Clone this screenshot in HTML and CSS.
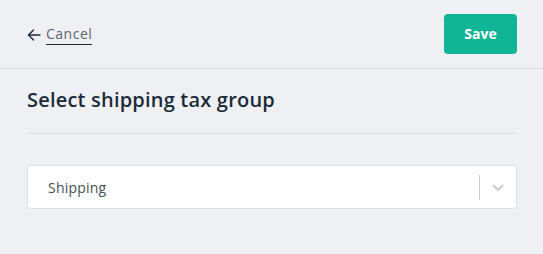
FILE: index.html
```html
<!DOCTYPE html>
<html lang="en">
<head>
    <meta charset="UTF-8">
    <meta name="viewport" content="width=device-width, initial-scale=1.0">
    <title>Select shipping tax group</title>
    <link rel="stylesheet" href="styles.css">
</head>
<body>
    <header class="topbar">
        <a class="cancel" href="#">
            <svg class="cancel-arrow" width="14" height="12" viewBox="0 0 14 12" fill="none" stroke="#1c2b3a" stroke-width="1.4" stroke-linecap="round" stroke-linejoin="round">
                <path d="M13 6H1.5"/>
                <path d="M6.5 1L1.5 6l5 5"/>
            </svg>
            <span class="cancel-text">Cancel</span>
        </a>
        <button class="save-btn">Save</button>
    </header>
    <main class="content">
        <h1 class="title">Select shipping tax group</h1>
        <div class="select-box">
            <span class="select-value">Shipping</span>
            <div class="select-indicators">
                <span class="select-sep"></span>
                <svg class="select-chevron" width="12" height="8" viewBox="0 0 12 8" fill="none" stroke="#cccccc" stroke-width="2" stroke-linecap="round" stroke-linejoin="round">
                    <path d="M1.5 1.5L6 6l4.5-4.5"/>
                </svg>
            </div>
        </div>
    </main>
</body>
</html>
```

FILE: styles.css
```css
body {
    margin: 0;
    padding: 0;
    background: #eff0f4;
    font-family: "Open Sans", Lato, sans-serif;
    color: #1c2b3a;
}
.topbar {
    display: flex;
    align-items: center;
    justify-content: space-between;
    height: 69px;
    padding: 0 26px 0 27px;
    border-bottom: 1px solid #dcdee3;
    box-sizing: border-box;
}
.cancel {
    display: flex;
    align-items: center;
    gap: 5px;
    text-decoration: none;
    color: #5c6670;
    margin-top: 1px;
}
.cancel-text {
    font-size: 14px;
    letter-spacing: 0.5px;
    line-height: 18px;
    padding-bottom: 1px;
    border-bottom: 1px solid #1c2b3a;
}
.save-btn {
    width: 73px;
    height: 40px;
    margin-top: -1px;
    border: none;
    border-radius: 4px;
    background: #12b496;
    color: #ffffff;
    font-family: "Open Sans", sans-serif;
    font-weight: 700;
    font-size: 14px;
    cursor: pointer;
}
.content {
    padding: 0 26px 0 27px;
}
.title {
    margin: 0;
    padding: 17px 0 20px;
    font-size: 20px;
    line-height: 27px;
    font-weight: 600;
    letter-spacing: 0.2px;
    border-bottom: 1px solid #dcdee3;
}
.select-box {
    display: flex;
    align-items: center;
    justify-content: space-between;
    height: 44px;
    margin-top: 31px;
    background: #ffffff;
    border: 1px solid #dfe1e6;
    border-radius: 4px;
    box-sizing: border-box;
}
.select-value {
    padding-left: 20px;
    font-size: 14px;
    color: #4a4f55;
    letter-spacing: 0.2px;
}
.select-indicators {
    display: flex;
    align-items: center;
    height: 100%;
}
.select-sep {
    width: 1px;
    height: 25px;
    background: #cccccc;
}
.select-chevron {
    margin: 2px 12px 0 12px;
}
```
